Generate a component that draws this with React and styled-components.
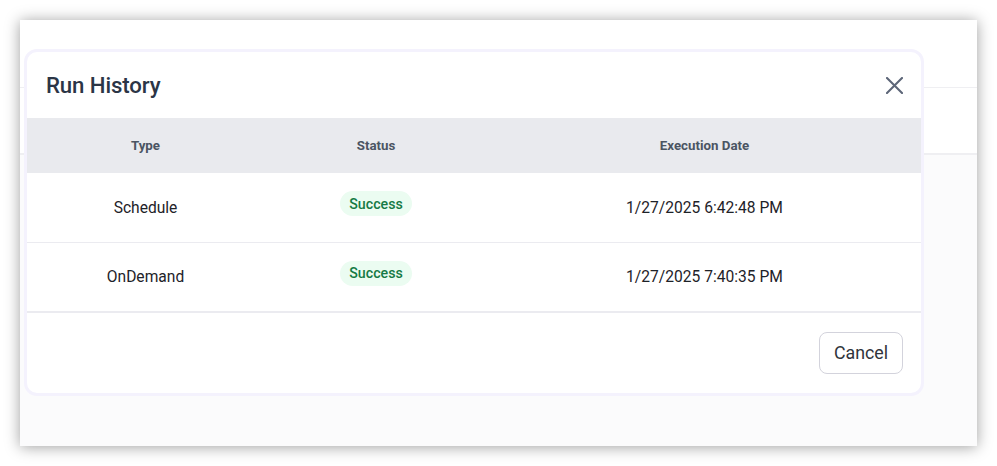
import React from "react";
import styled, { createGlobalStyle } from "styled-components";

const Global = createGlobalStyle`
  html, body { margin: 0; padding: 0; background: #ffffff; }
  body { font-family: Roboto, "Liberation Sans", sans-serif; }
  * { box-sizing: border-box; }
`;

const Stage = styled.div`
  width: 997px;
  height: 466px;
  padding: 20px 20px 0 20px;
  background: #ffffff;
`;

const Window = styled.div`
  position: relative;
  width: 957px;
  height: 426px;
  background: #fbfbfc;
  box-shadow: 0 1px 14px rgba(0, 0, 0, 0.38);
  display: flex;
  flex-direction: column;
`;

const PageBar = styled.div`
  height: ${(p) => p.$h}px;
  background: #ffffff;
  border-bottom: ${(p) => p.$b}px solid #efeff2;
`;

const Modal = styled.div`
  position: absolute;
  left: 4px;
  top: 29px;
  width: 900px;
  border: 3px solid #f4f2fd;
  border-radius: 13px;
  background: #ffffff;
  overflow: hidden;
  display: flex;
  flex-direction: column;
`;

const ModalHeader = styled.div`
  height: 66px;
  display: flex;
  align-items: center;
  justify-content: space-between;
  padding: 0 18px 0 19px;
`;

const Title = styled.h2`
  margin: 0;
  font-size: 22.2px;
  font-weight: 500;
  color: #2b3546;
  letter-spacing: -0.1px;
`;

const CloseButton = styled.button`
  width: 18px;
  height: 18px;
  padding: 0;
  border: none;
  background: none;
  display: flex;
  align-items: center;
  justify-content: center;
  color: #5d6678;
  cursor: pointer;
`;

const Grid = styled.div`
  display: grid;
  grid-template-columns: 237px 224px 1fr;
  align-items: center;
  height: ${(p) => p.$h}px;
  background: ${(p) => (p.$head ? "#e9eaee" : "#ffffff")};
  border-bottom: ${(p) => (p.$border ? `${p.$border}px solid #ebebf0` : "none")};
`;

const HeadCell = styled.div`
  text-align: center;
  font-size: 13.3px;
  font-weight: 700;
  color: #4b5563;
  padding-bottom: 1px;
`;

const Cell = styled.div`
  text-align: center;
  font-size: 15.6px;
  color: #1e2228;
  padding-top: ${(p) => p.$pt || 0}px;
`;

const BadgeCell = styled.div`
  display: flex;
  justify-content: center;
  padding-bottom: ${(p) => p.$pb || 0}px;
`;

const Badge = styled.span`
  display: inline-flex;
  align-items: center;
  height: 25px;
  padding: 0 9px;
  border-radius: 13px;
  background: #ebfcf1;
  color: #167a45;
  font-size: 14.2px;
  font-weight: 500;
`;

const Footer = styled.div`
  height: 80px;
  display: flex;
  align-items: center;
  justify-content: flex-end;
  padding: 0 18px 1px 0;
`;

const CancelButton = styled.button`
  height: 42px;
  width: 84px;
  border: 1px solid #d3d3dc;
  border-radius: 8px;
  background: #ffffff;
  font-family: Roboto, "Liberation Sans", sans-serif;
  font-size: 17.8px;
  color: #30343b;
  cursor: pointer;
`;

const runs = [
  { type: "Schedule", status: "Success", date: "1/27/2025 6:42:48 PM", pt: 0 },
  { type: "OnDemand", status: "Success", date: "1/27/2025 7:40:35 PM", pt: 0 },
];

export default function App() {
  return (
    <>
      <Global />
      <Stage>
        <Window>
          <PageBar $h={68} $b={1} />
          <PageBar $h={67} $b={2} />
          <Modal>
            <ModalHeader>
              <Title>Run History</Title>
              <CloseButton aria-label="Close">
                <svg width="17" height="17" viewBox="0 0 17 17" fill="none">
                  <path d="M1 1L16 16M16 1L1 16" stroke="currentColor" strokeWidth="2.1" strokeLinecap="round" />
                </svg>
              </CloseButton>
            </ModalHeader>
            <Grid $head $h={55}>
              <HeadCell>Type</HeadCell>
              <HeadCell>Status</HeadCell>
              <HeadCell>Execution Date</HeadCell>
            </Grid>
            {runs.map((r, i) => (
              <Grid key={i} $h={i === 0 ? 70 : 70} $border={i === 0 ? 1 : 2}>
                <Cell>{r.type}</Cell>
                <BadgeCell $pb={8}>
                  <Badge>{r.status}</Badge>
                </BadgeCell>
                <Cell>{r.date}</Cell>
              </Grid>
            ))}
            <Footer>
              <CancelButton>Cancel</CancelButton>
            </Footer>
          </Modal>
        </Window>
      </Stage>
    </>
  );
}
